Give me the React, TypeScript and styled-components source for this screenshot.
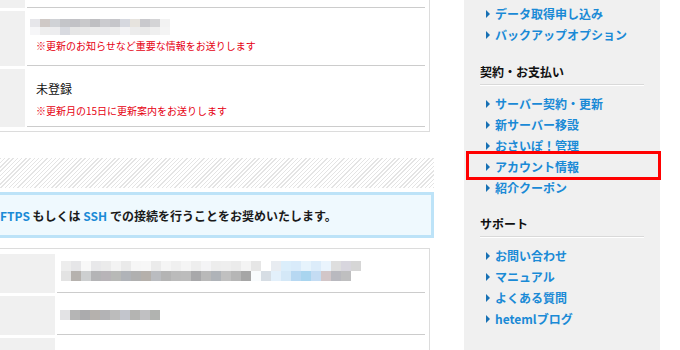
import React from 'react';
import styled, { createGlobalStyle } from 'styled-components';

const GlobalStyle = createGlobalStyle`
  html, body {
    margin: 0;
    padding: 0;
    background: #ffffff;
  }
  body {
    font-family: "Noto Sans CJK JP", "Noto Sans", sans-serif;
    font-size: 12px;
    color: #222222;
  }
`;

const Page = styled.div`
  width: 680px;
  height: 350px;
  overflow: hidden;
  display: flex;
  align-items: flex-start;
  gap: 30px;
`;

const Main = styled.div`
  width: 434px;
  flex: none;
  display: flex;
  flex-direction: column;
  & > * {
    flex: none;
  }
`;

const DataBox = styled.div<{ $top?: boolean }>`
  width: 429px;
  border-right: 1px solid #dcdcdc;
  ${({ $top }) =>
    $top
      ? 'border-bottom: 1px solid #dcdcdc; padding-bottom: 4px;'
      : 'border-top: 1px solid #dcdcdc; padding-top: 5px; margin-top: 10px;'}
  display: flex;
  flex-direction: column;
  gap: 3px;
`;

const Row = styled.div<{ $h: number }>`
  display: flex;
  flex: none;
  gap: 2px;
  height: ${({ $h }) => $h}px;
  padding-right: 4px;
`;

const Head = styled.div<{ $w: number }>`
  width: ${({ $w }) => $w}px;
  flex: none;
  background: #f0f0f0;
`;

const Cell = styled.div`
  flex: 1;
  border-bottom: 1px solid #cccccc;
  display: flex;
  flex-direction: column;
  align-items: flex-start;
  padding-left: 3px;
`;

const Plain = styled.div`
  font-size: 12px;
  line-height: 16px;
  margin: 12px 0 0 6px;
  color: #111;
`;

const Notice = styled.div<{ $mt: number }>`
  font-size: 10px;
  line-height: 14px;
  color: #e60012;
  margin: ${({ $mt }) => $mt}px 0 0 6px;
`;

const Mosaic = styled.div<{ $cols: number; $cw: number; $ch: number; $mt: number; $ml: number }>`
  display: grid;
  grid-template-columns: repeat(${({ $cols }) => $cols}, ${({ $cw }) => $cw}px);
  grid-auto-rows: ${({ $ch }) => $ch}px;
  margin: ${({ $mt }) => $mt}px 0 0 ${({ $ml }) => $ml}px;
`;

const Tile = styled.span``;

const Stripes = styled.div`
  height: 30px;
  margin-top: 26px;
  width: 434px;
  background: repeating-linear-gradient(
    -45deg,
    #e4e4e4 0px,
    #e4e4e4 1px,
    #ffffff 1px,
    #ffffff 3px
  );
`;

const InfoBox = styled.div`
  margin-top: 4px;
  height: 40px;
  width: 431px;
  border: 3px solid #bde3f8;
  border-left: none;
  background: #eff9fe;
  display: flex;
  align-items: center;
  font-size: 12px;
  font-weight: 700;
  color: #1a1a1a;
  white-space: nowrap;
`;

const Blue = styled.span`
  color: #1a8ad6;
`;

const Sidebar = styled.aside`
  width: 164px;
  height: 347px;
  flex: none;
  background: #f0f0f0;
  padding: 3px 16px 0;
  display: flex;
  flex-direction: column;
`;

const Links = styled.ul<{ $pt: number }>`
  list-style: none;
  margin: 0;
  padding: ${({ $pt }) => $pt}px 0 0;
`;

const LinkItem = styled.li`
  position: relative;
  height: 21px;
  line-height: 21px;
  padding-left: 6px;
  display: flex;
  align-items: center;
  gap: 5px;
  font-weight: 700;
  font-size: 12px;
  color: #1a8ad6;
  white-space: nowrap;
`;

const Arrow = styled.span`
  width: 0;
  height: 0;
  border-top: 4px solid transparent;
  border-bottom: 4px solid transparent;
  border-left: 4px solid #1670b4;
  flex: none;
`;

const Highlight = styled.span`
  position: absolute;
  left: -14px;
  right: -17px;
  top: -5px;
  bottom: -3px;
  border: 3px solid #ff0000;
  pointer-events: none;
`;

const Heading = styled.h3<{ $mt: number }>`
  margin: ${({ $mt }) => $mt}px 0 0;
  height: 20px;
  line-height: 20px;
  padding-bottom: 2px;
  font-size: 12px;
  font-weight: 700;
  color: #111;
  border-bottom: 1px solid #d9d9d9;
  box-shadow: 0 1px 0 #ffffff;
`;

const mail1 = [
  '#e6e6ea', '#cfc9c6', '#d0d2d6', '#c4c5c9', '#c2c2c6', '#c9c9cb', '#bfbfc2',
  '#cbcbcf', '#c6c6ca', '#d6d8df', '#e6e3de', '#c9c9cd', '#d4d4d6', '#f2f2f2',
  '#f6f6f8', '#eeeeee', '#ededef', '#d8dae0', '#e6e6e6', '#e8e8e8', '#eaeaea',
  '#e9e9eb', '#ececec', '#f3f3f5', '#ececec', '#eaeaea', '#efefef', '#f4f4f4',
];

const addr1 = [
  '#ededed', '#e6e6e8', '#f8f8f8', '#e8e8ea', '#ebebeb', '#f3f3f3', '#eaeaea',
  '#f6f6f6', '#f7f7f7', '#ebebeb', '#f5f5f5', '#f0f0f0', '#f5f5f5', '#eeeeee',
  '#f4f4f6', '#ededed', '#eeeeee', '#ebebeb', '#f4f4f4', '#e6e6e6', '#ffffff',
  '#e8ecf1', '#dbeefb', '#d9ebfa', '#e6f3fc', '#dcecfa', '#eaf4fd', '#dedede',
  '#d8d6de', '#d6d6d6',
  '#e3e3e3', '#b6b2ae', '#cdcfd0', '#b4b4b6', '#b8b4b8', '#b8b9b7', '#b0b3b8',
  '#b0b0b0', '#b5b0ab', '#babcc0', '#b4b4b4', '#bbbbbb', '#bcbcbc', '#a8a8aa',
  '#b9b9b9', '#afb3b8', '#c0c0c0', '#b6b6b6', '#a6a6a6', '#f8fbfd', '#d6dde4',
  '#e3f0fb', '#d4e8f7', '#b7d8f2', '#a9d5ef', '#c4dcf3', '#d2c6c8', '#b9b9bf',
  '#bfbfc0',
];

const addr2 = [
  '#e3e3e5', '#b5b5b5', '#ababad', '#b5b1ad', '#b3b3b5', '#bcbcbc', '#c2c5cc',
  '#b4b4b2', '#c0c0c2', '#b1b3b0',
];

const topLinks = ['データ取得申し込み', 'バックアップオプション'];
const contractLinks = ['サーバー契約・更新', '新サーバー移設', 'おさいぽ！管理', 'アカウント情報', '紹介クーポン'];
const supportLinks = ['お問い合わせ', 'マニュアル', 'よくある質問', 'hetemlブログ'];

const Tiles = ({ colors }: { colors: string[] }) => (
  <>
    {colors.map((c, i) => (
      <Tile key={i} style={{ background: c }} />
    ))}
  </>
);

const LinkList = ({ items, pt, active }: { items: string[]; pt: number; active?: string }) => (
  <Links $pt={pt}>
    {items.map((label) => (
      <LinkItem key={label}>
        <Arrow />
        {label}
        {label === active && <Highlight />}
      </LinkItem>
    ))}
  </Links>
);

export default function App() {
  return (
    <Page>
      <GlobalStyle />
      <Main>
        <DataBox $top>
          <Row $h={8}>
            <Head $w={25} />
            <Cell />
          </Row>
          <Row $h={55}>
            <Head $w={25} />
            <Cell>
              <Mosaic $cols={14} $cw={10} $ch={8} $mt={8} $ml={0}>
                <Tiles colors={mail1} />
              </Mosaic>
              <Notice $mt={4}>※更新のお知らせなど重要な情報をお送りします</Notice>
            </Cell>
          </Row>
          <Row $h={58}>
            <Head $w={25} />
            <Cell>
              <Plain>未登録</Plain>
              <Notice $mt={7}>※更新月の15日に更新案内をお送りします</Notice>
            </Cell>
          </Row>
        </DataBox>

        <Stripes />

        <InfoBox>
          <Blue>FTPS</Blue>&nbsp;もしくは&nbsp;<Blue>SSH</Blue>&nbsp;での接続を行うことをお奨めいたします。
        </InfoBox>

        <DataBox>
          <Row $h={39}>
            <Head $w={55} />
            <Cell>
              <Mosaic $cols={30} $cw={10} $ch={10} $mt={7} $ml={1}>
                <Tiles colors={addr1} />
              </Mosaic>
            </Cell>
          </Row>
          <Row $h={39}>
            <Head $w={55} />
            <Cell>
              <Mosaic $cols={10} $cw={10} $ch={10} $mt={14} $ml={0}>
                <Tiles colors={addr2} />
              </Mosaic>
            </Cell>
          </Row>
          <Row $h={30}>
            <Head $w={55} />
            <Cell />
          </Row>
        </DataBox>
      </Main>

      <Sidebar>
        <LinkList items={topLinks} pt={0} />
        <Heading $mt={17}>契約・お支払い</Heading>
        <LinkList items={contractLinks} pt={8} active="アカウント情報" />
        <Heading $mt={16}>サポート</Heading>
        <LinkList items={supportLinks} pt={8} />
      </Sidebar>
    </Page>
  );
}
